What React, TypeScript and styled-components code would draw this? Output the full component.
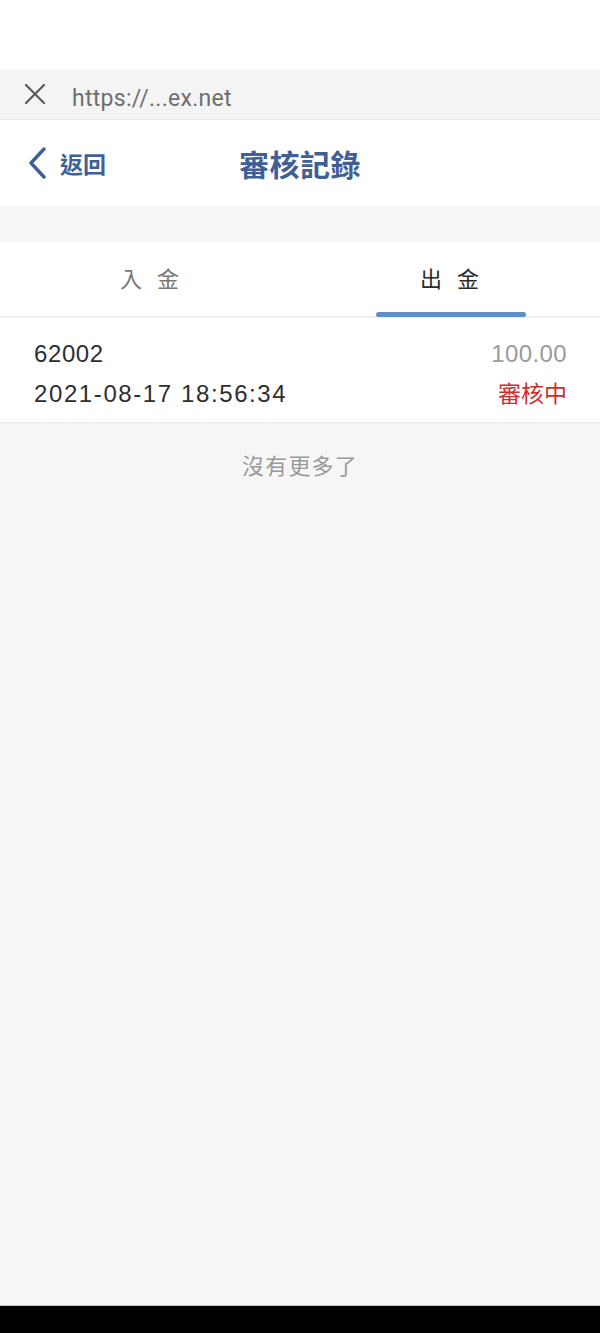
import React from 'react'
import styled, { createGlobalStyle } from 'styled-components'

const GlobalStyle = createGlobalStyle`
  html, body {
    margin: 0;
    padding: 0;
    background: #f7f5f6;
  }
  #root {
    min-height: 100vh;
  }
  * {
    box-sizing: border-box;
  }
`

const Page = styled.div`
  display: flex;
  flex-direction: column;
  height: 1333px;
  font-family: 'Liberation Sans', 'Noto Sans CJK TC', sans-serif;
  background: #f7f5f6;
`

const StatusBar = styled.div`
  height: 70px;
  background: #ffffff;
`

const UrlBar = styled.div`
  display: flex;
  align-items: center;
  height: 50px;
  padding: 0 0 0 24px;
  background: #f4f4f4;
  border-bottom: 1px solid #ebebeb;
`

const CloseButton = styled.button`
  all: unset;
  display: flex;
  width: 22px;
  height: 22px;
  margin-right: 26px;
  margin-top: -2px;
  color: #5a5a5a;
`

const UrlText = styled.span`
  padding-top: 7px;
  font-family: Roboto, 'Liberation Sans', sans-serif;
  font-size: 23px;
  color: #6e6e6e;
  letter-spacing: 0.3px;
`

const NavBar = styled.div`
  position: relative;
  display: flex;
  align-items: center;
  justify-content: center;
  height: 86px;
  background: #ffffff;
`

const BackLink = styled.button`
  all: unset;
  position: absolute;
  left: 28px;
  top: 0;
  bottom: 0;
  display: flex;
  align-items: center;
  gap: 12px;
  color: #3f5f96;
  font-family: 'Noto Sans CJK TC', sans-serif;
  font-size: 23px;
  font-weight: 700;
  cursor: pointer;
`

const Title = styled.h1`
  margin: 0;
  color: #3f5f96;
  font-family: 'Noto Sans CJK TC', sans-serif;
  font-size: 30px;
  font-weight: 700;
  letter-spacing: 0.5px;
`

const Gap = styled.div`
  height: 36px;
`

const Tabs = styled.div`
  display: flex;
  height: 76px;
  background: #ffffff;
  border-bottom: 2px solid #efefef;
`

const Tab = styled.button<{ active: boolean }>`
  all: unset;
  position: relative;
  flex: 1;
  display: flex;
  align-items: center;
  justify-content: center;
  padding-bottom: 4px;
  padding-left: 4px;
  font-family: 'Noto Sans CJK TC', sans-serif;
  font-size: 22px;
  letter-spacing: 5px;
  color: ${({ active }) => (active ? '#2b2b2b' : '#777777')};
  cursor: pointer;

  &::after {
    content: '';
    display: ${({ active }) => (active ? 'block' : 'none')};
    position: absolute;
    left: 50%;
    bottom: -1px;
    width: 150px;
    height: 5px;
    margin-left: -74px;
    border-radius: 3px;
    background: #5b8fc6;
  }
`

const Record = styled.div`
  display: flex;
  flex-direction: column;
  gap: 10px;
  padding: 21px 33px 0 34px;
  height: 105px;
  background: #ffffff;
  border-bottom: 1px solid #ebebeb;
`

const RecordLine = styled.div`
  display: flex;
  justify-content: space-between;
  align-items: center;
  height: 30px;
  line-height: 1;
`

const Primary = styled.span`
  font-size: 24px;
  color: #2e2e2e;
  letter-spacing: 0.6px;
`

const DateText = styled(Primary)`
  letter-spacing: 1.6px;
`

const Amount = styled.span`
  font-size: 24px;
  color: #9a9a9a;
  letter-spacing: 0.4px;
`

const Status = styled.span`
  margin-top: -3px;
  font-family: 'Noto Sans CJK TC', sans-serif;
  font-size: 23px;
  color: #cc2f2f;
`

const NoMore = styled.div`
  padding: 25px 0 0;
  text-align: center;
  font-family: 'Noto Sans CJK TC', sans-serif;
  font-size: 22px;
  color: #9a9a9a;
  letter-spacing: 1.2px;
`

const Spacer = styled.div`
  flex: 1;
`

const SystemBar = styled.div`
  height: 28px;
  background: #000000;
  border-top: 1px solid #c8c8c8;
`

export default function App() {
  const [tab, setTab] = React.useState<'in' | 'out'>('out')

  return (
    <>
      <GlobalStyle />
      <Page>
        <StatusBar />
        <UrlBar>
          <CloseButton aria-label="close">
            <svg width="22" height="22" viewBox="0 0 22 22" fill="none">
              <path d="M2 2 L20 20 M20 2 L2 20" stroke="currentColor" strokeWidth="2.2" strokeLinecap="round" />
            </svg>
          </CloseButton>
          <UrlText>https://...ex.net</UrlText>
        </UrlBar>

        <NavBar>
          <BackLink>
            <svg width="20" height="32" viewBox="0 0 20 32" fill="none">
              <path d="M16 2 L3 16 L16 30" stroke="currentColor" strokeWidth="3.4" strokeLinecap="round" strokeLinejoin="round" />
            </svg>
            返回
          </BackLink>
          <Title>審核記錄</Title>
        </NavBar>

        <Gap />

        <Tabs>
          <Tab active={tab === 'in'} onClick={() => setTab('in')}>入 金</Tab>
          <Tab active={tab === 'out'} onClick={() => setTab('out')}>出 金</Tab>
        </Tabs>

        <Record>
          <RecordLine>
            <Primary>62002</Primary>
            <Amount>100.00</Amount>
          </RecordLine>
          <RecordLine>
            <DateText>2021-08-17 18:56:34</DateText>
            <Status>審核中</Status>
          </RecordLine>
        </Record>

        <NoMore>沒有更多了</NoMore>
        <Spacer />
        <SystemBar />
      </Page>
    </>
  )
}
